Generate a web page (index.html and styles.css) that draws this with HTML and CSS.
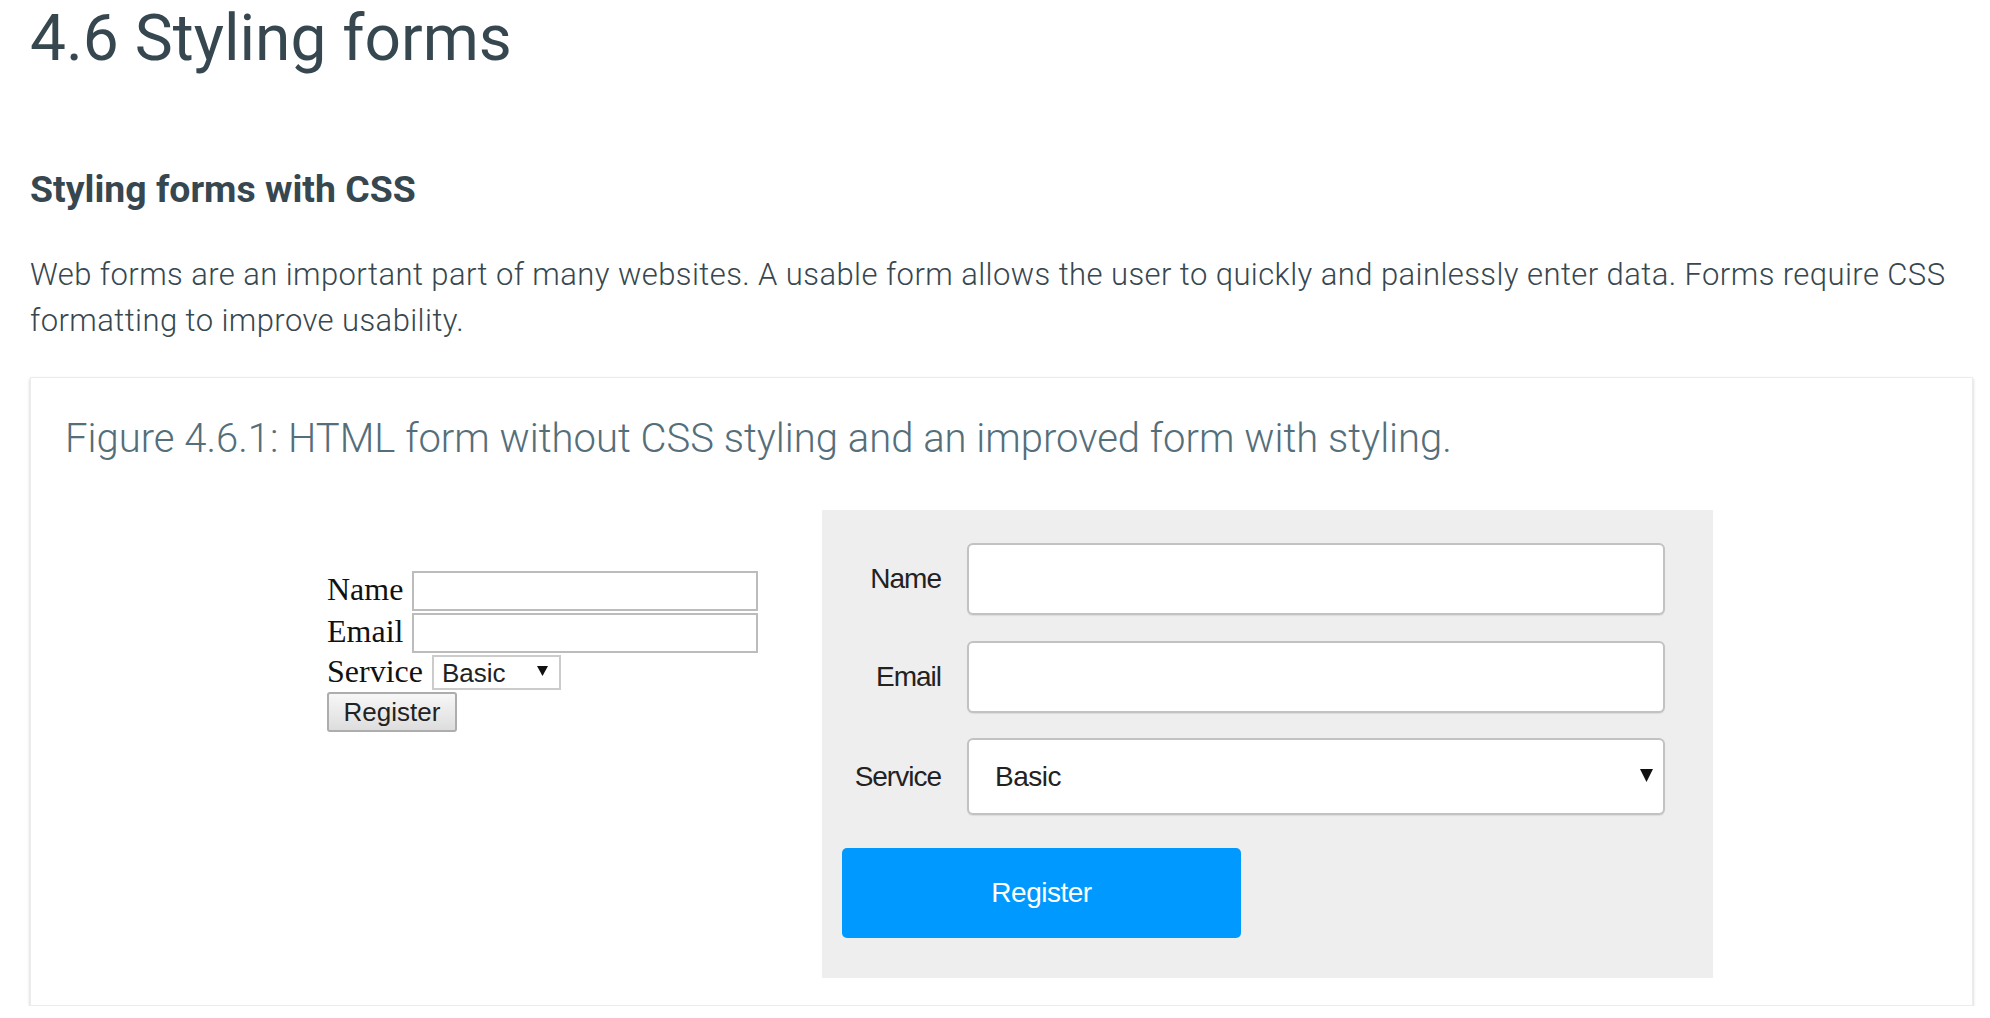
FILE: index.html
```html
<!DOCTYPE html>
<html lang="en">
<head>
<meta charset="utf-8">
<title>4.6 Styling forms</title>
<link rel="stylesheet" href="styles.css">
</head>
<body>
<main class="page">
  <h1 class="title">4.6 Styling forms</h1>
  <h2 class="subtitle">Styling forms with CSS</h2>
  <p class="intro">Web forms are an important part of many websites. A usable form allows the user to quickly and painlessly enter data. Forms require CSS formatting to improve usability.</p>
  <figure class="figure">
    <figcaption class="caption">Figure 4.6.1: HTML form without CSS styling and an improved form with styling.</figcaption>
    <div class="figure-row">
      <form class="plain-form">
        <div class="plain-row">
          <label class="plain-label" for="p-name">Name</label>
          <input class="plain-input" id="p-name" type="text">
        </div>
        <div class="plain-row">
          <label class="plain-label" for="p-email">Email</label>
          <input class="plain-input" id="p-email" type="text">
        </div>
        <div class="plain-row">
          <label class="plain-label" for="p-service">Service</label>
          <div class="plain-select-wrap">
            <select class="plain-select" id="p-service"><option>Basic</option></select>
            <svg class="plain-arrow" width="11" height="10" viewBox="0 0 11 10"><polygon points="0,0 11,0 5.5,10" fill="#111"/></svg>
          </div>
        </div>
        <div class="plain-row">
          <button class="plain-button" type="button">Register</button>
        </div>
      </form>
      <form class="styled-form">
        <label class="styled-label" for="s-name">Name</label>
        <input class="styled-input" id="s-name" type="text">
        <label class="styled-label" for="s-email">Email</label>
        <input class="styled-input" id="s-email" type="text">
        <label class="styled-label" for="s-service">Service</label>
        <div class="styled-select-wrap">
          <select class="styled-select" id="s-service"><option>Basic</option></select>
          <svg class="styled-arrow" width="13" height="13" viewBox="0 0 13 13"><polygon points="0,0 13,0 6.5,13" fill="#111"/></svg>
        </div>
        <button class="styled-button" type="button">Register</button>
      </form>
    </div>
  </figure>
</main>
</body>
</html>
```
FILE: styles.css
```css
* {
  box-sizing: border-box;
}

html,
body {
  margin: 0;
  background: #ffffff;
}

body {
  font-family: Roboto, "Liberation Sans", Arial, sans-serif;
  color: #37474f;
}

.page {
  padding: 1px 17px 0 30px;
}

.title {
  margin: 0;
  font-size: 64px;
  font-weight: 400;
  line-height: 76px;
}

.subtitle {
  margin: 90px 0 0;
  font-size: 37.4px;
  font-weight: 700;
  line-height: 44px;
}

.intro {
  margin: 41px 0 0;
  font-size: 31px;
  font-weight: 300;
  letter-spacing: 0.42px;
  line-height: 46px;
}

.figure {
  margin: 33px 0 0;
  border: 1px solid #ececec;
  box-shadow: 0 2px 3px rgba(0, 0, 0, 0.22);
  padding: 38px 0 27px 31px;
  background: #ffffff;
}

.caption {
  padding-left: 3px;
  font-size: 40px;
  font-weight: 300;
  line-height: 46px;
  color: #546e7a;
}

.figure-row {
  display: flex;
  align-items: flex-start;
  margin-top: 48px;
  padding-left: 265px;
}

/* Unstyled (browser default look) form */
.plain-form {
  width: 495px;
  padding-top: 61px;
  display: flex;
  flex-direction: column;
  gap: 2px;
  margin: 0;
}

.plain-row {
  display: flex;
  align-items: center;
  gap: 9px;
}

.plain-label {
  padding-bottom: 4px;
  font-family: "Liberation Serif", "Times New Roman", serif;
  font-size: 32px;
  line-height: 28px;
  color: #111111;
}

.plain-input {
  width: 346px;
  height: 40px;
  border: 2px solid #bcbcbc;
  background: #ffffff;
  margin: 0;
  padding: 0 4px;
  font-size: 26px;
}

.plain-select-wrap {
  position: relative;
  width: 129px;
  height: 35px;
}

.plain-select {
  appearance: none;
  -webkit-appearance: none;
  width: 100%;
  height: 100%;
  margin: 0;
  border: 2px solid #cbcbcb;
  border-radius: 0;
  background: #ffffff;
  padding: 0 0 0 8px;
  font-family: "Liberation Sans", Arial, sans-serif;
  font-size: 26px;
  color: #222222;
}

.plain-arrow {
  position: absolute;
  right: 13px;
  top: 11px;
  pointer-events: none;
}

.plain-button {
  width: 130px;
  height: 40px;
  margin: 0;
  padding: 0;
  border: 2px solid #adadad;
  border-radius: 3px;
  background: linear-gradient(#f7f7f7, #dddddd);
  font-family: "Liberation Sans", Arial, sans-serif;
  font-size: 26px;
  color: #222222;
}

/* Styled form */
.styled-form {
  width: 891px;
  margin: 0;
  padding: 33px 48px 40px 20px;
  background: #eeeeee;
  display: grid;
  grid-template-columns: 99px 698px;
  column-gap: 26px;
  row-gap: 26px;
  align-items: center;
}

.styled-label {
  justify-self: end;
  font-family: "Liberation Sans", Arial, sans-serif;
  font-size: 28px;
  letter-spacing: -1px;
  color: #222222;
}

.styled-input {
  width: 698px;
  height: 72px;
  margin: 0;
  border: 2px solid #c2c2c2;
  border-radius: 6px;
  background: #ffffff;
  box-shadow: 0 1px 1px rgba(0, 0, 0, 0.08);
  padding: 0 26px;
  font-size: 28px;
}

.styled-select-wrap {
  position: relative;
  width: 698px;
  height: 77px;
  margin-top: -1px;
}

.styled-select {
  appearance: none;
  -webkit-appearance: none;
  width: 100%;
  height: 100%;
  margin: 0;
  border: 2px solid #c2c2c2;
  border-radius: 6px;
  background: #ffffff;
  box-shadow: 0 1px 1px rgba(0, 0, 0, 0.08);
  padding: 0 0 0 26px;
  font-family: "Liberation Sans", Arial, sans-serif;
  font-size: 28px;
  letter-spacing: -0.5px;
  color: #222222;
}

.styled-arrow {
  position: absolute;
  right: 12px;
  top: 31px;
  pointer-events: none;
}

.styled-button {
  grid-column: 1 / -1;
  justify-self: start;
  width: 399px;
  height: 90px;
  margin: 7px 0 0;
  border: 0;
  border-radius: 5px;
  background: #0099ff;
  color: #ffffff;
  font-family: "Liberation Sans", Arial, sans-serif;
  font-size: 28px;
  letter-spacing: -0.5px;
}
```
